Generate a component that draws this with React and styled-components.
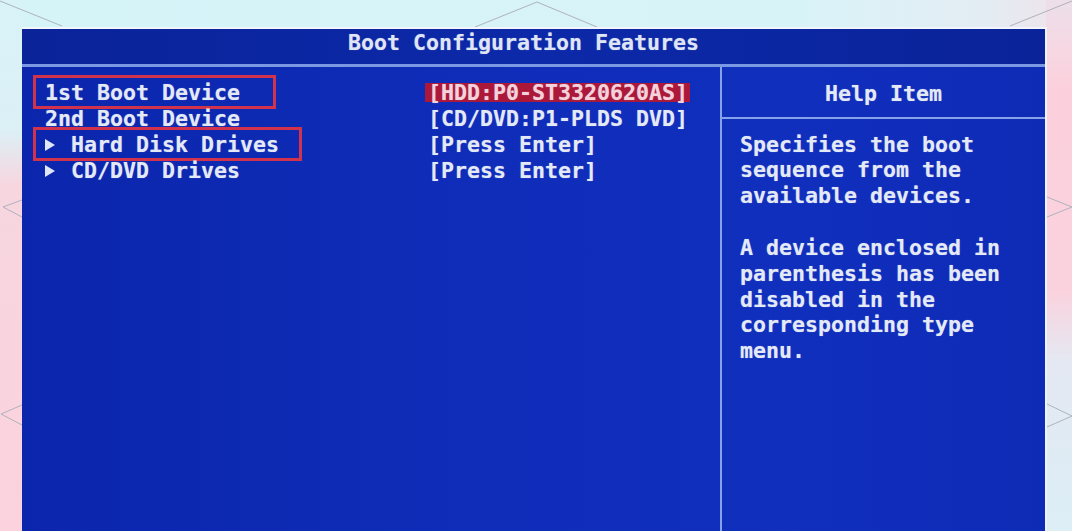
import React from 'react'
import styled, { createGlobalStyle } from 'styled-components'

const GlobalStyle = createGlobalStyle`
  html, body {
    margin: 0;
    padding: 0;
    overflow: hidden;
  }
`

// reach = how far the red annotation box runs past the end of the label
const menuItems = [
  { label: '1st Boot Device', value: '[HDD:P0-ST3320620AS]', selected: true, reach: 36 },
  { label: '2nd Boot Device', value: '[CD/DVD:P1-PLDS DVD]' },
  { label: 'Hard Disk Drives', value: '[Press Enter]', submenu: true, reach: 23 },
  { label: 'CD/DVD Drives', value: '[Press Enter]', submenu: true }
]

const helpLines = [
  'Specifies the boot',
  'sequence from the',
  'available devices.',
  '',
  'A device enclosed in',
  'parenthesis has been',
  'disabled in the',
  'corresponding type',
  'menu.'
]

const Backdrop = () => (
  <Lines width="1072" height="531" viewBox="0 0 1072 531">
    <g fill="none" stroke="#aeb2bd" strokeWidth="1">
      <polyline points="0,1 62,26" />
      <polyline points="475,27 537,2 597,27" />
      <polyline points="1010,26 1072,1" />
      <polyline points="22,200 3,207 22,217" />
      <polyline points="22,405 1,414 22,425" />
      <polyline points="1047,197 1072,207 1047,217" />
      <polyline points="1047,404 1072,416 1047,427" />
    </g>
  </Lines>
)

const App = () => (
  <Page>
    <GlobalStyle />
    <Backdrop />
    <Screen>
      <TitleBar>Boot Configuration Features</TitleBar>
      <Rule />
      <Body>
        <Main>
          {menuItems.map((item, idx) => (
            <Row key={`row_${idx}`}>
              <LabelCell>
                <Label $reach={item.reach}>
                  {item.submenu && <Arrow />}
                  {item.label}
                </Label>
              </LabelCell>
              <Value $selected={item.selected}>{item.value}</Value>
            </Row>
          ))}
        </Main>
        <Help>
          <HelpHead>Help Item</HelpHead>
          <HelpText>
            {helpLines.map((line, idx) => (
              <HelpLine key={`help_${idx}`}>{line || '\u00a0'}</HelpLine>
            ))}
          </HelpText>
        </Help>
      </Body>
    </Screen>
  </Page>
)

const Page = styled.div`
  position: relative;
  height: 531px;
  box-sizing: border-box;
  padding: 27px 25px 0 22px;
  display: flex;
  background:
    linear-gradient(180deg, #d8f3f8 0, #dcf0f6 130px, #f7d6e0 185px, #fbd2dd 100%) left top / 22px 100% no-repeat,
    linear-gradient(180deg, #ecdfe9 0, #f4d9e4 40px, #fbd0dc 90px, #fad2dd 290px, #e4e8f2 360px, #dceef6 100%) right top / 26px 100% no-repeat,
    linear-gradient(90deg, #d5f4f8 0, #d8f3f8 75%, #e4ecf3 92%, #f0e2ea 100%);
`

const Lines = styled.svg`
  position: absolute;
  inset: 0;
`

const Screen = styled.div`
  position: relative;
  flex: 1;
  display: flex;
  flex-direction: column;
  border-top: 2px solid #f2f6fa;
  border-right: 2px solid #eef3f8;
  background: linear-gradient(90deg, #0b26ac 0, #0f2db9 45%, #102fbd 75%, #0e2bb6 100%);
  font-family: "DejaVu Sans Mono", "Liberation Mono", monospace;
  font-weight: bold;
  font-size: 21.6px;
  line-height: 26px;
  color: #e4e9f6;
  text-shadow: 0 0 1px rgba(220, 230, 255, 0.5);
`

const TitleBar = styled.div`
  height: 35px;
  box-sizing: border-box;
  padding: 1px 20px 0 0;
  text-align: center;
  white-space: pre;
  background: linear-gradient(90deg, #0a2399 0, #0c29a9 50%, #0a2399 100%);
  color: #dfe5f4;
`

const Rule = styled.div`
  height: 3px;
  background: #7b98e3;
`

const Body = styled.div`
  flex: 1;
  display: flex;
`

const Main = styled.div`
  width: 698px;
  box-sizing: border-box;
  padding: 12.5px 0 0 23px;
`

const Row = styled.div`
  display: flex;
  white-space: pre;
`

const LabelCell = styled.div`
  width: 383px;
  flex: none;
`

const Label = styled.span`
  position: relative;

  ${(p) => p.$reach && `
    &::after {
      content: '';
      position: absolute;
      top: -4.5px;
      bottom: -4px;
      left: -12px;
      right: -${p.$reach}px;
      border: 3px solid #d2334c;
    }
  `}
`

const Arrow = styled.span`
  display: inline-block;
  width: 26px;
  height: 12px;
  vertical-align: 1px;

  &::before {
    content: '';
    display: block;
    width: 0;
    height: 0;
    border-left: 10px solid #dfe6f6;
    border-top: 6px solid transparent;
    border-bottom: 6px solid transparent;
  }
`

const Value = styled.span`
  display: inline-block;
  margin-left: -3px;
  padding: 0 2px 0 3px;
  color: ${(p) => (p.$selected ? '#f5d2da' : 'inherit')};
  background: ${(p) =>
    p.$selected
      ? 'linear-gradient(180deg, transparent 3.5px, #ab183a 3.5px, #ab183a 22.5px, transparent 22.5px)'
      : 'none'};
`

const Help = styled.div`
  flex: 1;
  display: flex;
  flex-direction: column;
  border-left: 2px solid #86a2e8;
`

const HelpHead = styled.div`
  height: 52px;
  box-sizing: border-box;
  padding: 13.5px 0 0 0;
  text-align: center;
  border-bottom: 2px solid #86a2e8;
`

const HelpText = styled.div`
  padding: 12.5px 0 0 18px;
  line-height: 25.85px;
`

const HelpLine = styled.div`
  white-space: pre;
`

export default App
